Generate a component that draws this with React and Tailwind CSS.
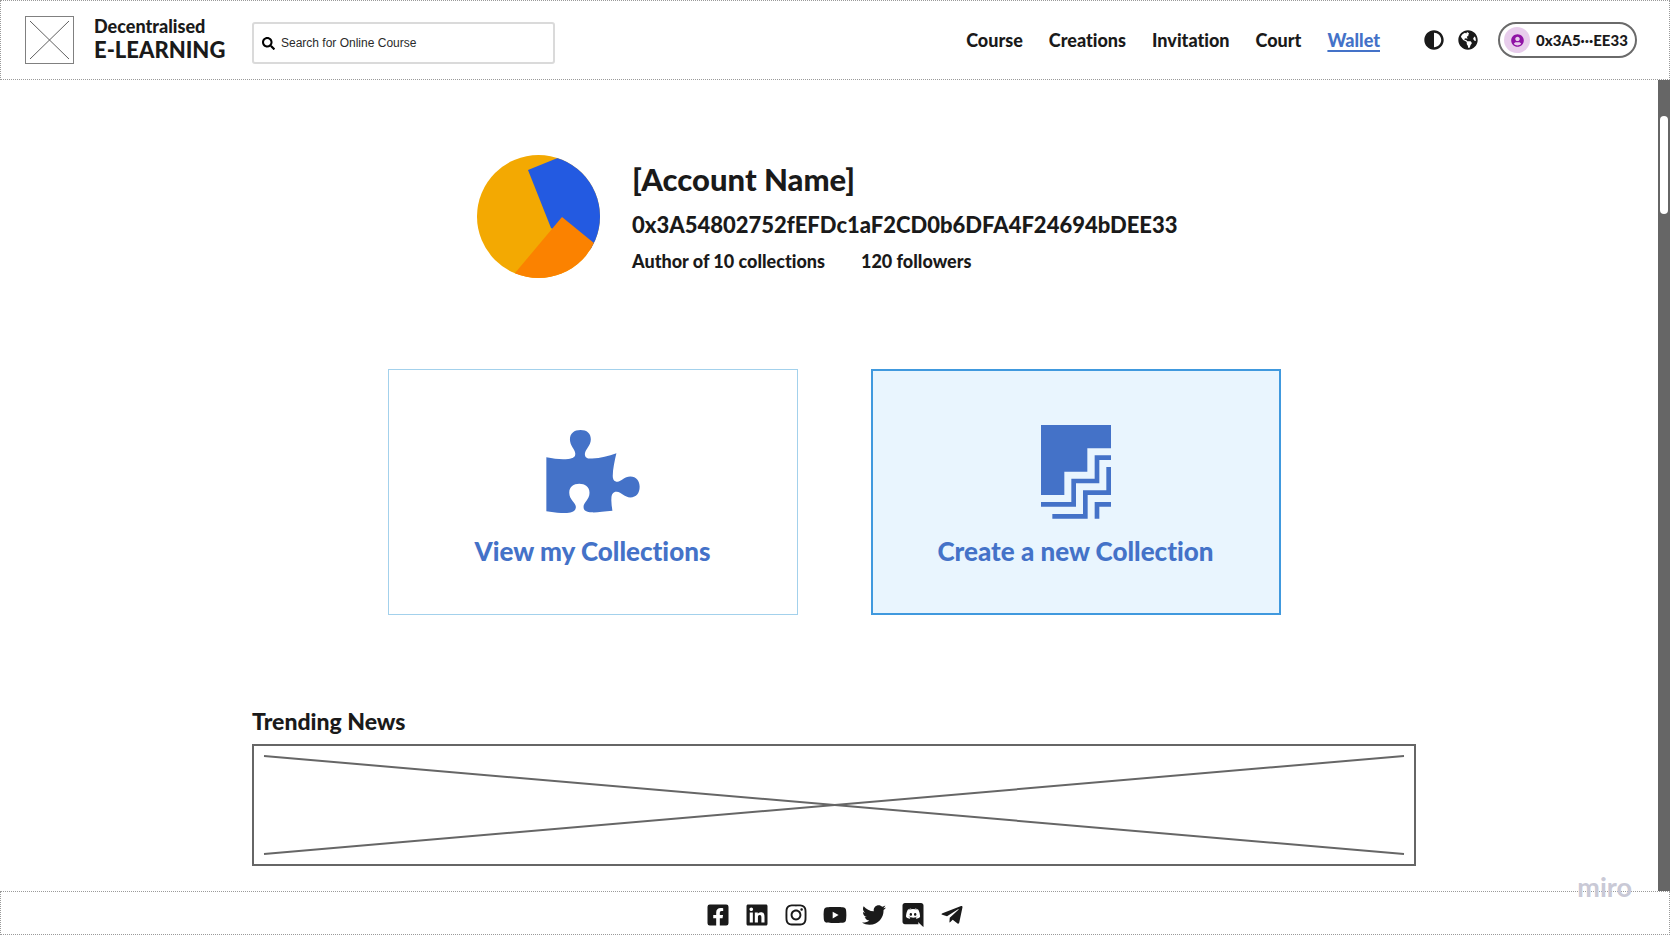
import {
  FaAdjust,
  FaFacebookSquare,
  FaGlobeAmericas,
  FaInstagram,
  FaLinkedin,
  FaSearch,
  FaTelegramPlane,
  FaTwitter,
  FaUserCircle,
  FaYoutube,
} from "react-icons/fa";

function DiscordIcon({ className }) {
  return (
    <svg viewBox="0 0 448 512" fill="currentColor" className={className} aria-hidden="true">
      <path d="M297.216 243.2c0 15.616-11.52 28.416-26.112 28.416-14.336 0-26.112-12.8-26.112-28.416s11.52-28.416 26.112-28.416c14.592 0 26.112 12.8 26.112 28.416zm-119.552-28.416c-14.592 0-26.112 12.8-26.112 28.416s11.776 28.416 26.112 28.416c14.592 0 26.112-12.8 26.112-28.416.256-15.616-11.52-28.416-26.112-28.416zM448 52.736V512c-64.494-56.994-43.868-38.128-118.784-107.776l13.568 47.36H52.48C23.552 451.584 0 428.032 0 398.848V52.736C0 23.552 23.552 0 52.48 0h343.04C424.448 0 448 23.552 448 52.736zm-72.96 242.688c0-82.432-36.864-149.248-36.864-149.248-36.864-27.648-71.936-26.88-71.936-26.88l-3.584 4.096c43.52 13.312 63.744 32.512 63.744 32.512-60.811-33.329-132.244-33.335-191.232-7.424-9.472 4.352-15.104 7.424-15.104 7.424s21.248-20.224 67.328-33.536l-2.56-3.072s-35.072-.768-71.936 26.88c0 0-36.864 66.816-36.864 149.248 0 0 21.504 37.12 78.08 38.912 0 0 9.472-11.52 17.152-21.248-32.512-9.728-44.8-30.208-44.8-30.208 3.766 2.636 9.976 6.053 10.496 6.4 43.21 24.198 104.588 32.126 159.744 8.96 8.96-3.328 18.944-8.192 29.44-15.104 0 0-12.8 20.992-46.336 30.464 7.68 9.728 16.896 20.736 16.896 20.736 56.576-1.792 78.336-38.912 78.336-38.912z" />
    </svg>
  );
}

function PuzzleIcon() {
  return (
    <svg viewBox="0 0 281 250" fill="currentColor" className="h-[83px] w-[94px]" aria-hidden="true">
      <path d="M0 82C25 87 46 89 66 87C82 85 88 80 87 70C86 58 71 48 71 28C71 10 84 0 103 0C122 0 134 10 134 28C134 48 117 58 116 72C116 83 123 87 138 86C164 85 187 78 211 70C206 91 200 118 200 138C200 150 205 156 214 156C226 155 235 140 253 140C271 140 281 153 281 171C281 190 271 203 253 203C236 203 226 187 212 186C203 185 196 192 196 205C195 219 197 231 199 243C173 245 152 249 137 248C119 247 112 242 112 232C112 217 130 210 130 189C130 171 116 162 99 162C82 162 69 171 69 189C69 211 89 219 89 232C89 242 80 249 62 250C40 251 20 248 0 245Z" />
    </svg>
  );
}

function StepsIcon() {
  return (
    <svg viewBox="0 0 210 282" className="h-[94px] w-[70px]" aria-hidden="true">
      <path d="M0 0H210V70H139V140H70V210H0Z" fill="currentColor" />
      <g fill="none" stroke="currentColor" strokeWidth="14">
        <path d="M0 238H98V168H168V98H210" />
        <path d="M34 274H133V203H203V126" />
        <path d="M168 281V238H210" />
      </g>
    </svg>
  );
}

function AccountAvatar() {
  return (
    <svg viewBox="0 0 123 123" className="size-[123px] shrink-0" role="img" aria-label="Account avatar">
      <clipPath id="avatar-clip">
        <circle cx="61.5" cy="61.5" r="61.5" />
      </clipPath>
      <g clipPath="url(#avatar-clip)">
        <path d="M0 0H123V123H0Z" fill="#f3a902" />
        <path d="M51 15L88 0H123V100L74 73Z" fill="#235ae1" />
        <path d="M85 62L33 124H123V93Z" fill="#fb8200" />
      </g>
    </svg>
  );
}

function Cross() {
  return (
    <svg className="size-full" aria-hidden="true">
      <line x1="0%" y1="0%" x2="100%" y2="100%" stroke="currentColor" />
      <line x1="0%" y1="100%" x2="100%" y2="0%" stroke="currentColor" />
    </svg>
  );
}

const navItems = ["Course", "Creations", "Invitation", "Court", "Wallet"];

const socials = [
  { name: "Facebook", Icon: FaFacebookSquare },
  { name: "LinkedIn", Icon: FaLinkedin },
  { name: "Instagram", Icon: FaInstagram },
  { name: "YouTube", Icon: FaYoutube },
  { name: "Twitter", Icon: FaTwitter },
  { name: "Discord", Icon: DiscordIcon },
  { name: "Telegram", Icon: FaTelegramPlane },
];

function Header() {
  return (
    <header className="flex h-20 items-center border border-dotted border-[#9a9a9a] pr-8 pl-6">
      <div className="h-12 w-[49px] shrink-0 border border-[#808080] p-1 text-[#606060]">
        <Cross />
      </div>
      <div className="mb-1 ml-5 flex w-[138px] shrink-0 flex-col">
        <span className="text-[18px] leading-6">Decentralised</span>
        <span className="text-[22px] leading-6">E-LEARNING</span>
      </div>
      <label className="mt-1.5 ml-5 flex h-[42px] w-[303px] items-center gap-1.5 rounded-[3px] border-2 border-[#dadada] px-2">
        <FaSearch className="size-[13px] shrink-0 text-black" aria-hidden="true" />
        <input
          type="search"
          aria-label="Search for Online Course"
          placeholder="Search for Online Course"
          className="min-w-0 flex-1 font-['Liberation_Sans',sans-serif] text-xs font-normal outline-none placeholder:text-[#2a2a2a]"
        />
      </label>
      <nav className="ml-auto flex gap-[26px] text-[18px] leading-6">
        {navItems.map((item) => (
          <a
            key={item}
            href={"#" + item.toLowerCase()}
            className={item === "Wallet" ? "text-[#4472c8] underline decoration-2 underline-offset-3" : ""}
          >
            {item}
          </a>
        ))}
      </nav>
      <div className="ml-11 flex items-center gap-3.5">
        <button type="button" aria-label="Toggle contrast">
          <FaAdjust className="size-5" />
        </button>
        <button type="button" aria-label="Change language">
          <FaGlobeAmericas className="size-5" />
        </button>
      </div>
      <button
        type="button"
        className="ml-5 flex h-9 w-[139px] items-center gap-1.5 rounded-full border-2 border-[#6a6a6a] pl-1 text-[15px] whitespace-nowrap"
      >
        <span className="flex size-[26px] shrink-0 items-center justify-center rounded-full bg-[#e8cdec]">
          <FaUserCircle className="size-[13px] text-[#8f12a5]" />
        </span>
        0x3A5···EE33
      </button>
    </header>
  );
}

export default function App() {
  return (
    <div className="relative flex min-h-screen flex-col bg-white font-['Lato',sans-serif] font-black text-[#1a1a1a] [font-variant-ligatures:none]">
      <Header />
      <div className="flex flex-1">
        <main className="flex min-w-0 flex-1 flex-col items-center pt-[75px] pb-6 pl-2.5">
          <section className="flex w-full max-w-[714px] items-center gap-8">
            <AccountAvatar />
            <div className="pt-1">
              <h1 className="text-[31px] leading-9">[Account Name]</h1>
              <p className="mt-2 text-[22px] leading-10">0x3A54802752fEFDc1aF2CD0b6DFA4F24694bDEE33</p>
              <p className="flex gap-9 text-[18px] leading-8">
                <span>Author of 10 collections</span>
                <span>120 followers</span>
              </p>
            </div>
          </section>

          <section className="mt-[91px] flex gap-[73px] text-[26px] leading-8 text-[#4472c8]">
            <button
              type="button"
              className="flex h-[246px] w-[410px] flex-col items-center justify-center gap-[13px] border border-[#a3d1ec] pt-1"
            >
              <span className="flex h-[100px] items-center">
                <PuzzleIcon />
              </span>
              View my Collections
            </button>
            <button
              type="button"
              className="flex h-[246px] w-[410px] flex-col items-center justify-center gap-[13px] border-2 border-[#4099de] bg-[#e9f5fe] pt-1"
            >
              <span className="flex h-[100px] items-center">
                <StepsIcon />
              </span>
              Create a new Collection
            </button>
          </section>

          <section className="mt-[90px] w-full max-w-[1164px]">
            <h2 className="text-[23px] leading-8">Trending News</h2>
            <div className="mt-[7px] h-[122px] border-2 border-[#666] p-2.5 text-[#666] [&_line]:stroke-2 [&_svg]:overflow-visible">
              <Cross />
            </div>
          </section>
        </main>
        <div className="flex w-3 shrink-0 flex-col items-center bg-[#666] pt-9">
          <div className="h-[98px] w-2 rounded-full bg-white" />
        </div>
      </div>
      <footer className="flex h-11 items-center justify-center border border-dotted border-[#9a9a9a]">
        <ul className="flex gap-[13px] pt-1">
          {socials.map(({ name, Icon }) => (
            <li key={name}>
              <a href={"#" + name.toLowerCase()} aria-label={name} className="flex size-[26px] items-center justify-center">
                <Icon className="size-6" />
              </a>
            </li>
          ))}
        </ul>
      </footer>
      <span className="absolute right-[38px] bottom-8 text-[27px] leading-8 font-bold text-[#c9c9d6]">
        miro
      </span>
    </div>
  );
}
